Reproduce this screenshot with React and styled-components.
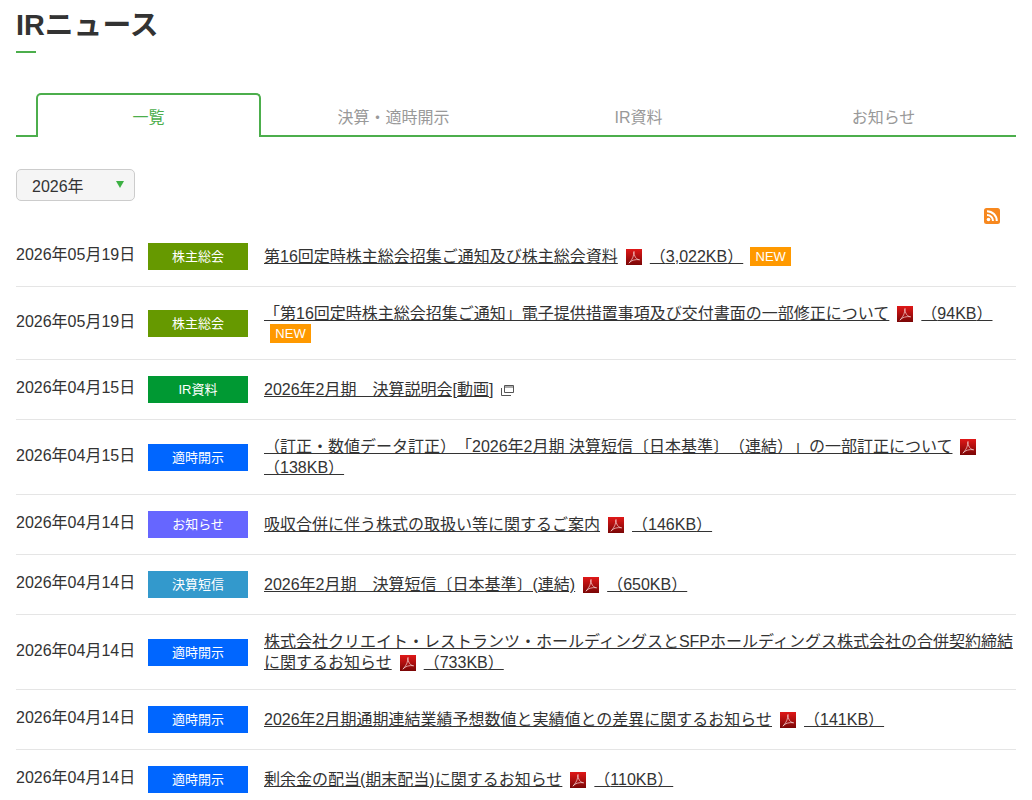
import styled, { createGlobalStyle } from 'styled-components'

const GlobalStyle = createGlobalStyle`
  html, body {
    margin: 0;
    height: 800px;
    overflow: hidden;
    background: #fff;
  }
  body {
    color: #333;
    font-family: "Liberation Sans", "Noto Sans CJK JP", sans-serif;
    font-size: 16px;
    text-spacing-trim: space-all;
  }
`;

const Page = styled.main`
  padding: 0 16px;
`;

const Title = styled.h1`
  margin: 0;
  padding-top: 4px;
  font-size: 28.8px;
  line-height: 42px;
  font-weight: 700;
  &::after {
    content: '';
    display: block;
    width: 20px;
    height: 2px;
    margin-top: 5px;
    background: #4cae4c;
  }
`;

const Tabs = styled.nav`
  display: flex;
  gap: 20px;
  margin-top: 40px;
  padding: 0 20px;
  border-bottom: 2px solid #4cae4c;
`;

const Tab = styled.a`
  flex: 1;
  line-height: 46px;
  text-align: center;
  color: ${p => (p.$active ? '#4cae4c' : '#999')};
  box-sizing: border-box;
  border: 2px solid ${p => (p.$active ? '#4cae4c' : 'transparent')};
  border-bottom: 0;
  border-radius: 5px 5px 0 0;
  margin-bottom: ${p => (p.$active ? '-2px' : '0')};
  height: ${p => (p.$active ? '44px' : '42px')};
  background: #fff;
`;

const YearSelect = styled.div`
  display: flex;
  align-items: center;
  justify-content: space-between;
  box-sizing: border-box;
  width: 119px;
  height: 32px;
  margin-top: 32px;
  padding: 0 10px 1px 15px;
  background: #f5f5f5;
  border: 1px solid #ccc;
  border-radius: 5px;
  &::after {
    content: '';
    border-top: 7px solid #3cb043;
    border-left: 4px solid transparent;
    border-right: 4px solid transparent;
  }
`;

const FeedRow = styled.div`
  display: flex;
  justify-content: flex-end;
  padding: 7px 16px 0 0;
  height: 19px;
`;

const NewsList = styled.ul`
  margin: 0;
  padding: 0;
  list-style: none;
`;

const NewsRow = styled.li`
  display: flex;
  align-items: center;
  padding: 16px 0;
  border-bottom: 1px solid #e5e5e5;
`;

const NewsDate = styled.time`
  flex: none;
  width: 132px;
  line-height: 19px;
  padding-bottom: 4px;
`;

const Category = styled.span`
  flex: none;
  width: 100px;
  height: 27px;
  margin-right: 16px;
  font-size: 13px;
  line-height: 27px;
  text-align: center;
  color: #fff;
  background: ${p => p.$color};
`;

const NewsBody = styled.div`
  flex: 1;
  line-height: 21px;
`;

const NewsLink = styled.a`
  color: #333;
  text-decoration: underline;
`;

const NewBadge = styled.span`
  display: inline-block;
  box-sizing: border-box;
  width: 41px;
  height: 19px;
  margin-left: 7px;
  font-size: 13px;
  line-height: 19px;
  text-align: center;
  color: #fff;
  background: #f90;
  vertical-align: 1px;
`;

const WrappedBadge = styled(NewBadge)`
  display: block;
  margin-left: 6px;
`;

const PdfSvg = styled.svg`
  display: inline-block;
  vertical-align: -3px;
  margin: 0 8px;
`;

const WindowSvg = styled.svg`
  display: inline-block;
  vertical-align: -1px;
  margin-left: 8px;
`;

const PdfIcon = () => (
  <PdfSvg width="16" height="16" viewBox="0 0 16 16">
    <defs>
      <linearGradient id="pdfBg" x1="0" y1="0" x2="0" y2="1">
        <stop offset="0" stopColor="#e01818" />
        <stop offset="1" stopColor="#7a0606" />
      </linearGradient>
    </defs>
    <rect width="16" height="16" fill="url(#pdfBg)" />
    <path
      d="M8 2.500c-.6 1.200.6 4.500 1.600 6 1 1.300 2.600 2.200 4 2.300-1.700-.4-4.200-.2-6.200.4-1.900.6-3.700 1.700-4.400 3 .9-1 2.800-3.500 3.700-5.500.6-1.500 1.300-4.600 1.300-6.200z"
      fill="none"
      stroke="#fbdcdc"
      strokeWidth="0.7"
    />
  </PdfSvg>
);

const WindowIcon = () => (
  <WindowSvg width="13" height="11" viewBox="0 0 13 11">
    <path d="M3.500 .5h9v7h-9z M3.500 2h9" fill="none" stroke="#555" />
    <path d="M.5 3v7.500h9.500" fill="none" stroke="#555" />
  </WindowSvg>
);

const RssIcon = () => (
  <svg width="16" height="16" viewBox="0 0 16 16">
    <rect width="16" height="16" rx="2.500" fill="#f7881f" />
    <circle cx="4.500" cy="11.500" r="1.800" fill="#fff" />
    <path d="M3 7a6 6 0 0 1 6 6" fill="none" stroke="#fff" strokeWidth="2" />
    <path d="M3 3.200A9.800 9.800 0 0 1 12.800 13" fill="none" stroke="#fff" strokeWidth="2" />
  </svg>
);

const COLORS = {
  株主総会: '#690',
  IR資料: '#093',
  適時開示: '#06f',
  お知らせ: '#66f',
  決算短信: '#39c',
};

const news = [
  { date: '2026年05月19日', cat: '株主総会', text: '第16回定時株主総会招集ご通知及び株主総会資料', size: '3,022KB', isNew: true },
  { date: '2026年05月19日', cat: '株主総会', text: '「第16回定時株主総会招集ご通知」電子提供措置事項及び交付書面の一部修正について', size: '94KB', wrapNew: true },
  { date: '2026年04月15日', cat: 'IR資料', text: '2026年2月期　決算説明会[動画]', video: true },
  { date: '2026年04月15日', cat: '適時開示', text: '（訂正・数値データ訂正）「2026年2月期 決算短信〔日本基準〕（連結）」の一部訂正について', size: '138KB' },
  { date: '2026年04月14日', cat: 'お知らせ', text: '吸収合併に伴う株式の取扱い等に関するご案内', size: '146KB' },
  { date: '2026年04月14日', cat: '決算短信', text: '2026年2月期　決算短信〔日本基準〕(連結)', size: '650KB' },
  { date: '2026年04月14日', cat: '適時開示', text: '株式会社クリエイト・レストランツ・ホールディングスとSFPホールディングス株式会社の合併契約締結に関するお知らせ', size: '733KB' },
  { date: '2026年04月14日', cat: '適時開示', text: '2026年2月期通期連結業績予想数値と実績値との差異に関するお知らせ', size: '141KB' },
  { date: '2026年04月14日', cat: '適時開示', text: '剰余金の配当(期末配当)に関するお知らせ', size: '110KB' },
];

const App = () => (
  <Page>
    <GlobalStyle />
    <Title>IRニュース</Title>
    <Tabs>
      <Tab $active>一覧</Tab>
      <Tab>決算・適時開示</Tab>
      <Tab>IR資料</Tab>
      <Tab>お知らせ</Tab>
    </Tabs>
    <YearSelect>2026年</YearSelect>
    <FeedRow>
      <RssIcon />
    </FeedRow>
    <NewsList>
      {news.map(item => (
        <NewsRow key={item.text}>
          <NewsDate>{item.date}</NewsDate>
          <Category $color={COLORS[item.cat]}>{item.cat}</Category>
          <NewsBody>
            <NewsLink>{item.text}</NewsLink>
            {item.video && <WindowIcon />}
            {item.size && <PdfIcon />}
            {item.size && <NewsLink>（{item.size}）</NewsLink>}
            {item.isNew && <NewBadge>NEW</NewBadge>}
            {item.wrapNew && <WrappedBadge>NEW</WrappedBadge>}
          </NewsBody>
        </NewsRow>
      ))}
    </NewsList>
  </Page>
);

export default App
